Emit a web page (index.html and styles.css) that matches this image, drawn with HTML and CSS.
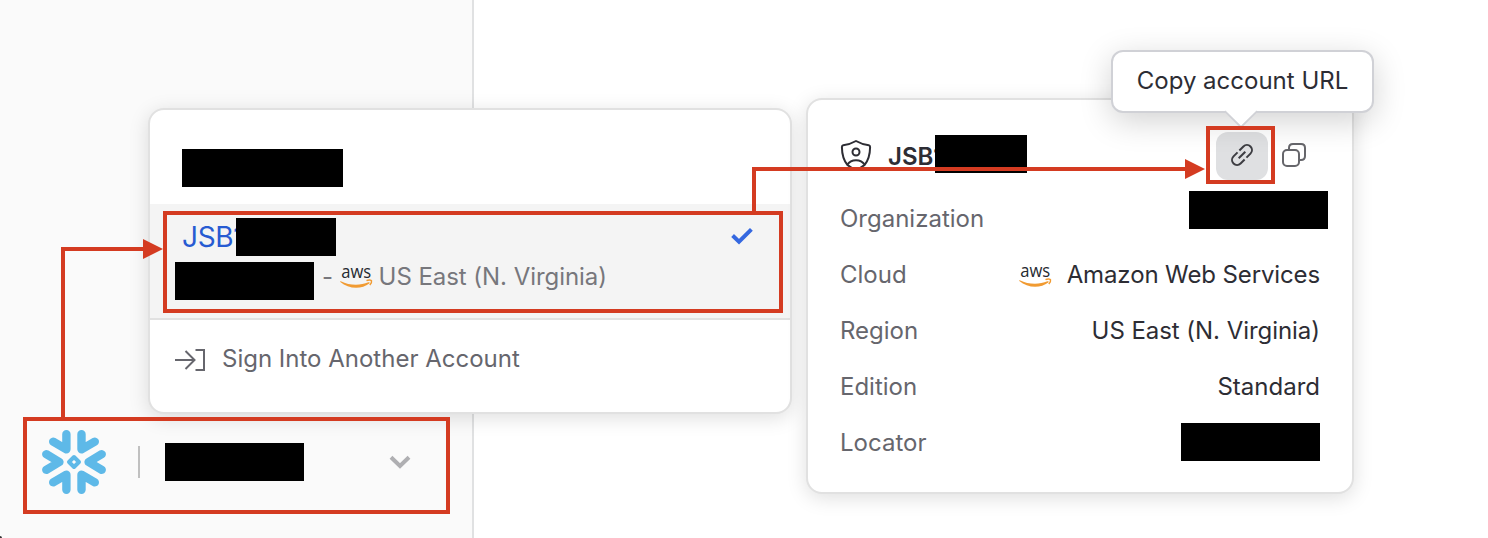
FILE: index.html
```html
<!DOCTYPE html>
<html lang="en">
<head>
<meta charset="utf-8">
<title>Account menu</title>
<link rel="stylesheet" href="styles.css">
</head>
<body>
<div class="app">
  <aside class="sidebar">
    <div class="account-bar">
      <svg class="snowflake" viewBox="0 0 64 64">
        <g fill="none" stroke="#5eb9e8" stroke-width="8.400" stroke-linecap="round" stroke-linejoin="round">
          <path d="M24.400 4.200V19.300L11.200 11.700"/>
          <path d="M39.500 4.200V19.300L52.800 11.700"/>
          <path d="M24.400 59.800V44.700L11.200 52.300"/>
          <path d="M39.500 59.800V44.700L52.800 52.300"/>
          <path d="M4.300 24.200L17.400 32L4.300 39.800"/>
          <path d="M59.700 24.200L46.600 32L59.700 39.800"/>
          <path d="M32 27L37 32L32 37L27 32Z" stroke-width="4"/>
        </g>
      </svg>
      <span class="bar-divider"></span>
      <span class="redact w139 user-name"></span>
      <svg class="chevron" viewBox="0 0 24 16"><path d="M3 3.300L12 12L21 3.300" fill="none" stroke="#afafb2" stroke-width="4"/></svg>
    </div>
    <span class="corner"></span>
  </aside>
  <main class="content"></main>
</div>

<section class="menu">
  <div class="menu-head"><span class="redact w161"></span></div>
  <div class="menu-account">
    <div class="account-id">
      <span class="account-name">JSB1</span><span class="redact w100"></span>
      <svg class="check" viewBox="0 0 24 18"><path d="M2.600 8.500L9 14.600L21.400 2.400" fill="none" stroke="#3568e0" stroke-width="4"/></svg>
    </div>
    <div class="account-region">
      <span class="redact w139"></span>
      <span class="dash">-</span>
      <svg class="aws" viewBox="0 0 34 26">
        <text class="aws-word" x="1.200" y="14.300" textLength="30" lengthAdjust="spacingAndGlyphs">aws</text>
        <path d="M.8 17.200C9.500 21.600 20 21.800 28.400 18.300c1-.4 1.700.5.900 1.200C21.500 25.500 8.500 25.100.300 17.900c-.3-.3 0-.8.500-.7z" fill="#f19b32"/>
        <path d="M26.500 16.700c2.200-1.100 4.700-.8 5 .1.300 1.200-.5 3-1.700 4.200" fill="none" stroke="#f19b32" stroke-width="1.500"/>
      </svg>
      <span class="region-name">US East (N. Virginia)</span>
    </div>
  </div>
  <div class="sign-in">
    <svg class="sign-icon" viewBox="0 0 32 24"><path d="M0 12H19.500M10.500 3L19.500 12L10.500 21M20.500 2H29V22H20.500" fill="none" stroke="#66666d" stroke-width="2"/></svg>
    <span class="sign-label">Sign Into Another Account</span>
  </div>
</section>

<section class="card">
  <header class="card-head">
    <svg class="shield" viewBox="0 0 32 34">
      <g fill="none" stroke="#2d2d34" stroke-width="2" stroke-linejoin="round">
        <path d="M16 2C12 4.300 7.500 5.700 3.200 6.300Q1.900 6.600 1.900 8C2 16 4.500 22.500 7.500 26Q10.500 29 16 30Q21.500 29 24.500 26C27.500 22.500 30 16 30.100 8Q30.100 6.600 28.800 6.300C24.500 5.700 20 4.300 16 2Z"/>
        <circle cx="16" cy="13" r="3.500"/>
        <path d="M7.500 25.500C11 19.800 21 19.800 24.500 25.500"/>
      </g>
    </svg>
    <strong class="card-name">JSB1</strong><span class="redact w92"></span>
    <button class="link-button" aria-label="Copy account URL">
      <svg class="link-icon" viewBox="0 0 24 24">
        <g transform="translate(12 12) rotate(-45)" fill="none" stroke="#3d3d42" stroke-width="2">
          <path d="M-1.300 -5H-7A5 5 0 0 0 -7 5H-1.300"/>
          <path d="M1.300 -5H7A5 5 0 0 1 7 5H1.300"/>
          <path d="M-4.700 0H4.700"/>
        </g>
      </svg>
    </button>
    <svg class="copy-icon" viewBox="0 0 26 26">
      <g fill="none" stroke="#66666b" stroke-width="2">
        <rect x="2" y="8" width="16" height="16" rx="4"/>
        <path d="M8 8V6Q8 2 12 2H20Q24 2 24 6V14Q24 18 20 18H18"/>
      </g>
    </svg>
  </header>
  <div class="row"><span class="label">Organization</span><span class="redact w139 organization"></span></div>
  <div class="row">
    <span class="label">Cloud</span>
    <span class="value">
      <svg class="aws" viewBox="0 0 34 26">
        <text class="aws-word" x="1.200" y="14.300" textLength="30" lengthAdjust="spacingAndGlyphs">aws</text>
        <path d="M.8 17.200C9.500 21.600 20 21.800 28.400 18.300c1-.4 1.700.5.900 1.200C21.500 25.500 8.500 25.100.300 17.900c-.3-.3 0-.8.500-.7z" fill="#f19b32"/>
        <path d="M26.500 16.700c2.200-1.100 4.700-.8 5 .1.300 1.200-.5 3-1.700 4.200" fill="none" stroke="#f19b32" stroke-width="1.500"/>
      </svg>
      <span class="cloud-name">Amazon Web Services</span>
    </span>
  </div>
  <div class="row"><span class="label">Region</span><span class="value region-value">US East (N. Virginia)</span></div>
  <div class="row"><span class="label">Edition</span><span class="value">Standard</span></div>
  <div class="row"><span class="label">Locator</span><span class="redact w139 locator"></span></div>
</section>

<div class="tooltip">
  <span class="tooltip-text">Copy account URL</span>
  <svg class="tail" viewBox="0 0 34 18"><path d="M0 0H34V1H33L17 17L1 1H0Z" fill="#fff"/><path d="M1 1L17 17L33 1" fill="none" stroke="#d0d1d6" stroke-width="2"/><path d="M1 0H33L17 15.500Z" fill="#fff"/></svg>
</div>

<svg class="annotations" viewBox="0 0 1488 538">
  <g fill="none" stroke="#d43b21" stroke-width="4">
    <rect x="25" y="419" width="423" height="93"/>
    <rect x="165" y="213" width="616" height="98"/>
    <rect x="1208" y="128" width="65" height="54"/>
    <path d="M63 417V249H144"/>
    <path d="M754 211V169H1186"/>
  </g>
  <path d="M143 239L163 249L143 259ZM1185 159L1205 169L1185 179Z" fill="#d43b21"/>
</svg>
</body>
</html>
```
FILE: styles.css
```css
* { box-sizing: border-box; }
body {
  margin: 0;
  width: 1488px;
  height: 538px;
  overflow: hidden;
  position: relative;
  background: #fff;
  color: #2d2d34;
  font: 24px/30px Inter, "Liberation Sans", sans-serif;
}
svg { display: block; flex: none; }
.app { display: flex; height: 538px; }
.sidebar {
  display: flex;
  flex-direction: column;
  justify-content: flex-end;
  width: 474px;
  background: #fafafa;
  border-right: 2px solid #e0e1e2;
}
.content { flex: 1; }
.account-bar { display: flex; align-items: center; height: 96px; margin-bottom: 26px; padding-left: 42px; }
.snowflake { width: 64px; height: 64px; }
.bar-divider { width: 2px; height: 32px; margin-left: 32px; background: #c0c0c0; }
.user-name { margin-left: 25px; }
.chevron { width: 24px; height: 16px; margin-left: 84px; }
.corner { width: 2px; height: 2px; background: #333; border-top-right-radius: 2px; }

.redact { position: relative; flex: none; height: 38px; background: #000; }
.w161 { width: 161px; }
.w139 { width: 139px; }
.w100 { width: 100px; }
.w92 { width: 92px; }

.menu, .card {
  position: absolute;
  background: #fff;
  border: 2px solid #e1e1e1;
  border-radius: 16px;
  box-shadow: 0 4px 20px rgba(0, 0, 0, .13);
}
.menu { left: 148px; top: 108px; width: 644px; height: 306px; color: #66666d; }
.menu-head { display: flex; height: 94px; padding: 39px 32px 0; }
.menu-account { height: 116px; padding: 14px 36px 0 25px; background: #f4f4f4; border-bottom: 2px solid #e1e1e1; }
.account-id { display: flex; align-items: center; height: 38px; padding-left: 7px; }
.account-name { width: 54px; white-space: nowrap; font-size: 28px; letter-spacing: -.3px; color: #275bd2; }
.check { width: 24px; height: 18px; margin: -2px 0 0 auto; }
.account-region { display: flex; height: 38px; margin-top: 6px; color: #77777c; }
.dash { width: 14px; margin-left: 8px; }
.aws { width: 34px; height: 26px; overflow: visible; }
.aws-word { font: 500 18.5px "Open Sans", "Noto Sans", sans-serif; fill: #252a31; }
.account-region .aws { margin: 2px 0 0 4px; }
.region-name { margin-left: 4.6px; letter-spacing: -.05px; }
.sign-in { display: flex; align-items: center; height: 78px; padding-left: 25px; }
.sign-icon { width: 32px; height: 24px; margin-top: 1px; }
.sign-label { margin-left: 15px; }

.card { left: 806px; top: 98px; width: 548px; height: 396px; padding: 28px 32px 0; }
.card-head { display: flex; align-items: center; height: 56px; }
.shield { width: 32px; height: 34px; }
.card-name { width: 47px; margin-left: 16px; padding-top: 2px; white-space: nowrap; font-weight: 600; }
.card-head .redact { margin-top: -4px; }
.link-button {
  display: flex;
  align-items: center;
  justify-content: center;
  width: 52px;
  height: 48px;
  margin-left: 189px;
  padding: 0 0 2px;
  border: 0;
  border-radius: 12px;
  background: #dfe0e2;
}
.link-icon { width: 24px; height: 24px; overflow: visible; }
.copy-icon { width: 26px; height: 26px; margin: -2px 0 0 13px; }
.row { display: flex; align-items: center; justify-content: space-between; height: 56px; }
.row:nth-child(2) { margin-top: 7px; }
.label { color: #66666d; }
.value { display: flex; align-items: center; }
.card .aws { margin-top: 1px; }
.cloud-name { margin-left: 14px; letter-spacing: -.12px; }
.region-value { letter-spacing: -.05px; }
.organization { margin: -18px -8px 0 0; }
.locator { margin-top: -2px; }

.tooltip {
  position: absolute;
  left: 1111px;
  top: 50px;
  display: flex;
  align-items: center;
  justify-content: center;
  width: 263px;
  height: 63px;
  padding-bottom: 2px;
  background: #fff;
  border: 2px solid #d0d1d6;
  border-radius: 12px;
  box-shadow: 0 8px 32px rgba(0, 0, 0, .18);
}
.tail { position: absolute; left: 111px; top: 58px; width: 34px; height: 18px; }
.annotations { position: absolute; left: 0; top: 0; width: 1488px; height: 538px; }
```
